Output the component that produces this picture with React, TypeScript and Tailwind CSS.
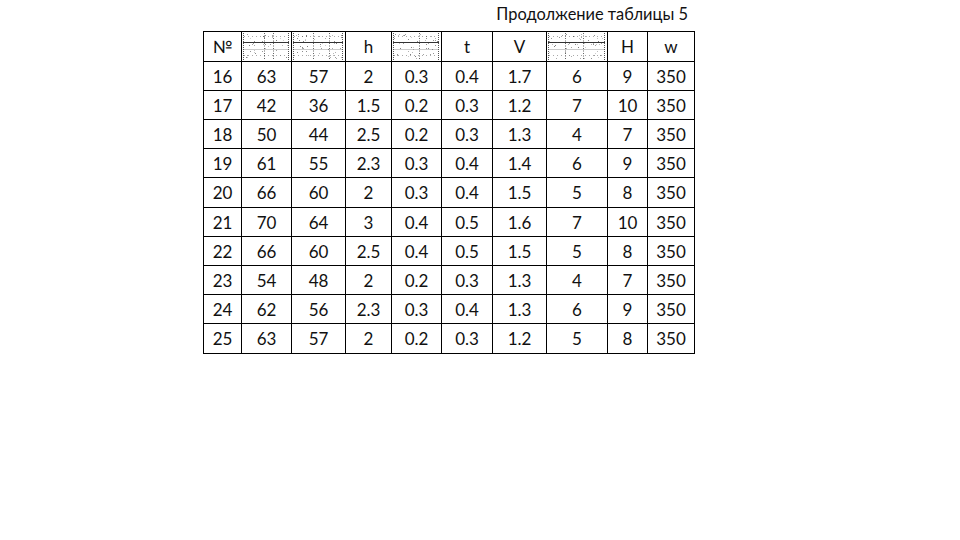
import React from 'react';

const colW = ['w-[38px]', 'w-[50px]', 'w-[54px]', 'w-[46px]', 'w-[50px]', 'w-[51px]', 'w-[54px]', 'w-[61px]', 'w-[40px]', 'w-[47px]'];

const rows: string[][] = [
  ['16', '63', '57', '2', '0.3', '0.4', '1.7', '6', '9', '350'],
  ['17', '42', '36', '1.5', '0.2', '0.3', '1.2', '7', '10', '350'],
  ['18', '50', '44', '2.5', '0.2', '0.3', '1.3', '4', '7', '350'],
  ['19', '61', '55', '2.3', '0.3', '0.4', '1.4', '6', '9', '350'],
  ['20', '66', '60', '2', '0.3', '0.4', '1.5', '5', '8', '350'],
  ['21', '70', '64', '3', '0.4', '0.5', '1.6', '7', '10', '350'],
  ['22', '66', '60', '2.5', '0.4', '0.5', '1.5', '5', '8', '350'],
  ['23', '54', '48', '2', '0.2', '0.3', '1.3', '4', '7', '350'],
  ['24', '62', '56', '2.3', '0.3', '0.4', '1.3', '6', '9', '350'],
  ['25', '63', '57', '2', '0.2', '0.3', '1.2', '5', '8', '350'],
];

const rowH = ['h-[29px]', 'h-[29px]', 'h-[29px]', 'h-[29px]', 'h-[30px]', 'h-[29px]', 'h-[29px]', 'h-[29px]', 'h-[29px]', 'h-[30px]'];

// broken formula picture: sparse dotted grid with a couple of rules
function DotImg({ w, v, seed }: { w: number; v: number[]; seed: number }) {
  const h = 29;
  let s = seed;
  const rnd = () => {
    s = (s * 9301 + 49297) % 233280;
    return s / 233280;
  };
  const dots: { x: number; y: number; o: number }[] = [];
  for (let i = 0; i < w * 0.9; i++) {
    dots.push({ x: Math.floor(rnd() * (w - 4)) + 2, y: Math.floor(rnd() * (h - 4)) + 2, o: 0.25 + rnd() * 0.45 });
  }
  return (
    <svg width={w} height={h} viewBox={`0 0 ${w} ${h}`} className="block">
      <line x1={1} x2={w - 1} y1={10.5} y2={10.5} stroke="#333" />
      <line x1={1} x2={w - 1} y1={17.5} y2={17.5} stroke="#ccc" />
      {[4, 23].map((y) => (
        <line key={y} x1={2} x2={w - 2} y1={y + 0.5} y2={y + 0.5} stroke="#aaa" strokeDasharray="1 3" />
      ))}
      {v.map((x) => (
        <line key={x} x1={x + 0.5} x2={x + 0.5} y1={1} y2={h - 1} stroke="#666" strokeDasharray="1 1.5" />
      ))}
      <line x1={1.5} x2={1.5} y1={1} y2={h - 1} stroke="#555" strokeDasharray="1 1" />
      <line x1={w - 1.5} x2={w - 1.5} y1={1} y2={h - 1} stroke="#555" strokeDasharray="1 1" />
      {dots.map((d, i) => (
        <rect key={i} x={d.x} y={d.y} width={1} height={1} fill="#444" opacity={d.o} />
      ))}
    </svg>
  );
}

export default function App() {
  return (
    <div className="w-[960px] h-[540px] bg-white text-[#111] font-['Lato',sans-serif]">
      <div className="ml-[203px] w-[491px]">
        <div className="h-[31px] pt-[4px] pr-[6px] text-right text-[16.4px] leading-[20px]">Продолжение таблицы 5</div>
        <table className="border-collapse table-fixed w-[491px] text-[17px] leading-none">
          <colgroup>
            {colW.map((c, i) => (
              <col key={i} className={c} />
            ))}
          </colgroup>
          <thead>
            <tr className="h-[30px]">
              <th className="border border-black font-normal text-[17px]">№</th>
              <th className="border border-black p-0 align-middle"><DotImg w={48} v={[22, 31]} seed={7} /></th>
              <th className="border border-black p-0 align-middle"><DotImg w={52} v={[21, 37]} seed={19} /></th>
              <th className="border border-black font-normal text-[17px]">h</th>
              <th className="border border-black p-0 align-middle"><DotImg w={48} v={[27]} seed={31} /></th>
              <th className="border border-black font-normal text-[17px]">t</th>
              <th className="border border-black font-normal text-[17px]">V</th>
              <th className="border border-black p-0 align-middle"><DotImg w={59} v={[18, 36]} seed={53} /></th>
              <th className="border border-black font-normal text-[17px]">H</th>
              <th className="border border-black font-normal text-[17px]">w</th>
            </tr>
          </thead>
          <tbody>
            {rows.map((r, i) => (
              <tr key={i} className={rowH[i]}>
                {r.map((c, j) => (
                  <td key={j} className="border border-black text-center p-0">{c}</td>
                ))}
              </tr>
            ))}
          </tbody>
        </table>
      </div>
    </div>
  );
}
